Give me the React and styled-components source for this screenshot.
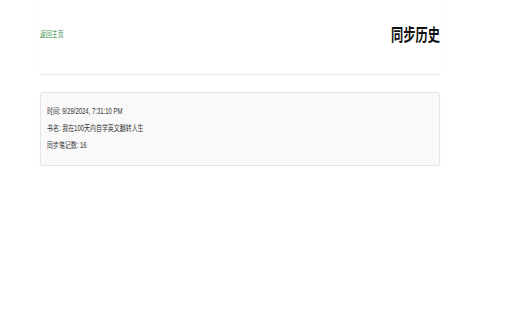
import React from 'react';
import styled, { createGlobalStyle } from 'styled-components';

const GlobalStyle = createGlobalStyle`
  html, body {
    margin: 0;
    padding: 0;
    background: #ffffff;
    font-family: "Liberation Sans", "Noto Sans CJK SC", sans-serif;
    color: #222;
  }
`;

const Page = styled.div`
  width: 400px;
  padding-left: 40px;
`;

const Header = styled.header`
  height: 75px;
  padding-bottom: 8px;
  box-sizing: border-box;
  display: flex;
  align-items: center;
  justify-content: space-between;
  border-bottom: 1px solid #eeeeee;
  box-shadow: 0 1px 2px rgba(0, 0, 0, 0.03);
`;

const Squeeze = styled.span`
  display: inline-block;
  white-space: nowrap;
  transform: scaleX(${(p) => p.$x || 0.74});
  transform-origin: ${(p) => (p.$right ? 'right' : 'left')} center;
`;

const HomeLink = styled.a`
  font-size: 8px;
  color: #2f8a45;
  text-decoration: none;
  cursor: pointer;
`;

const Title = styled.h1`
  margin: 0;
  font-size: 17px;
  font-weight: 700;
  color: #111;
  font-family: "Noto Sans CJK SC", sans-serif;
`;

const Card = styled.div`
  margin-top: 17px;
  padding: 10px 6px 11px;
  background: #f9f9f9;
  border: 1px solid #e4e4e4;
  border-radius: 3px;
  box-shadow: 0 1px 2px rgba(0, 0, 0, 0.05);
`;

const Line = styled.div`
  height: 17px;
  line-height: 17px;
  font-size: 8.5px;
  color: #333;
`;

const record = {
  time: '9/29/2024, 7:31:10 PM',
  book: '我在100天内自学英文翻转人生',
  count: 16,
};

export default function App() {
  return (
    <>
      <GlobalStyle />
      <Page>
        <Header>
          <HomeLink>
            <Squeeze>返回主页</Squeeze>
          </HomeLink>
          <Title>
            <Squeeze $x={0.72} $right>同步历史</Squeeze>
          </Title>
        </Header>
        <Card>
          <Line><Squeeze $x={0.7}>时间: {record.time}</Squeeze></Line>
          <Line><Squeeze $x={0.7}>书名: {record.book}</Squeeze></Line>
          <Line><Squeeze $x={0.7}>同步笔记数: {record.count}</Squeeze></Line>
        </Card>
      </Page>
    </>
  );
}
